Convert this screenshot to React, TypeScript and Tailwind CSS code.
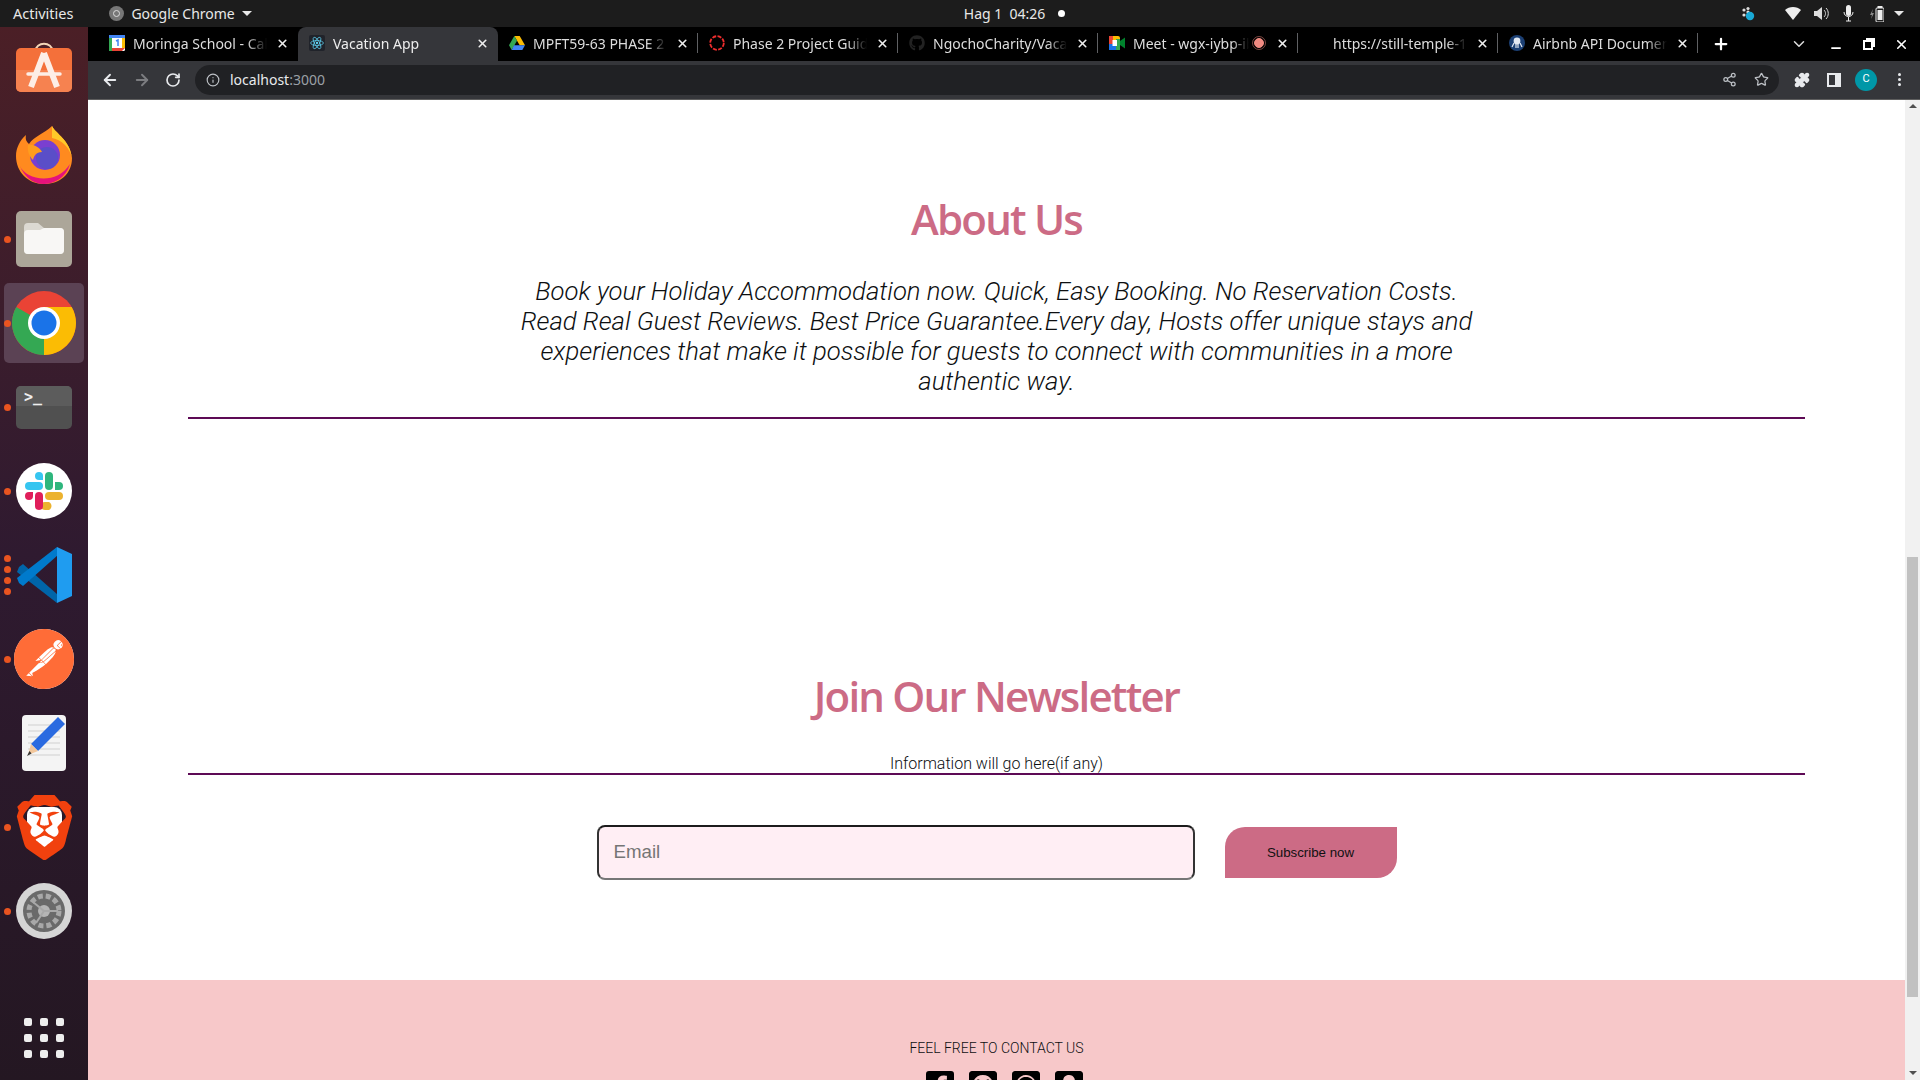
import { FaGithub, FaFacebookSquare, FaGithubSquare, FaWhatsappSquare, FaSnapchatSquare } from 'react-icons/fa'
import { SiBrave, SiPostman } from 'react-icons/si'
import { ArrowLeft, ArrowRight, ChevronDown, Info, Minus, Plus, RotateCw, Share2, Star, X, Puzzle } from 'lucide-react'

const uiFont = "font-['Noto_Sans',sans-serif]"

function AppStoreIcon() {
  return (
    <svg width="56" height="52" viewBox="0 0 56 52">
      <path d="M19 12 C20 1 36 1 37 12" fill="none" stroke="#f3d6b8" strokeWidth="2" />
      <rect y="8" width="56" height="44" rx="5" fill="#f4703a" />
      <path d="M0 30 H56 V47 a5 5 0 0 1 -5 5 H5 a5 5 0 0 1 -5 -5 Z" fill="#f68250" />
      <path d="M28 13 L15 47 M28 13 L41 47" stroke="#fdeee6" strokeWidth="6" fill="none" />
      <path d="M12 34 H44" stroke="#fdeee6" strokeWidth="3.5" strokeLinecap="round" />
    </svg>
  )
}

function FirefoxIcon() {
  return (
    <svg width="56" height="58" viewBox="0 0 56 58">
      <path d="M36 0 C40 8 54 14 56 32 C56 48 44 58 28 58 C12 58 0 46 0 30 C0 22 4 14 10 9 C9 14 11 16 13 18 C18 10 28 8 36 0 Z" fill="#ff8a1f" />
      <path d="M36 0 C40 8 54 14 56 32 C54 22 46 14 36 12 Z" fill="#ffc929" />
      <path d="M4 40 C10 54 40 60 54 38 C50 52 38 58 28 58 C16 58 8 50 4 40 Z" fill="#e5127c" />
      <circle cx="29" cy="29" r="15" fill="#7a3fd0" />
      <circle cx="31" cy="32" r="11" fill="#5a4ec8" />
      <path d="M12 19 C18 18 24 22 26 26 C20 26 18 30 17 34 C13 30 11 24 12 19 Z" fill="#ff9d1e" />
    </svg>
  )
}

function FilesIcon() {
  return (
    <div className="flex h-14 w-14 items-center justify-center rounded-[5px] bg-[#aca699]">
      <svg width="40" height="32" viewBox="0 0 40 32">
        <path d="M0 4 a4 4 0 0 1 4 -4 H14 L20 5 H36 a4 4 0 0 1 4 4 V27 a4 4 0 0 1 -4 4 H4 a4 4 0 0 1 -4 -4 Z" fill="#dcd9d2" />
        <path d="M0 11 a4 4 0 0 1 4 -4 H16 L20 5 H36 a4 4 0 0 1 4 4 V27 a4 4 0 0 1 -4 4 H4 a4 4 0 0 1 -4 -4 Z" fill="#f8f7f5" />
      </svg>
    </div>
  )
}

function ChromeIcon({ size }: { size: number }) {
  return (
    <svg width={size} height={size} viewBox="0 0 64 64">
      <circle cx="32" cy="32" r="32" fill="#ea4335" />
      <path d="M32 32 L4.3 16 A32 32 0 0 0 32 64 Z" fill="#34a853" />
      <path d="M32 32 L32 64 A32 32 0 0 0 59.7 16 L32 16 Z" fill="#fbbc04" />
      <circle cx="32" cy="32" r="16" fill="#fff" />
      <circle cx="32" cy="32" r="12.5" fill="#1a73e8" />
    </svg>
  )
}

function TerminalIcon() {
  return (
    <div className="relative h-[43px] w-14 overflow-hidden rounded-[5px] bg-[#505050]">
      <div className="h-5 bg-[#5c5c5c]" />
      <span className="absolute left-2 top-0 font-['DejaVu_Sans_Mono',monospace] text-[15px] font-bold leading-[22px] text-[#eeeeee]">&gt;_</span>
    </div>
  )
}

function SlackIcon() {
  return (
    <div className="flex h-14 w-14 items-center justify-center rounded-full bg-white">
      <svg width="38" height="38" viewBox="0 0 38 38">
        <rect x="0" y="10" width="18" height="8" rx="4" fill="#36c5f0" />
        <path d="M10 4 a4 4 0 0 1 8 0 v4 h-4 a4 4 0 0 1 -4 -4 Z" fill="#36c5f0" />
        <rect x="20" y="0" width="8" height="18" rx="4" fill="#2eb67d" />
        <path d="M30 10 h4 a4 4 0 0 1 0 8 h-4 Z" fill="#2eb67d" />
        <rect x="20" y="20" width="18" height="8" rx="4" fill="#ecb22e" />
        <path d="M20 30 h4 a4 4 0 0 1 -4 8 a4 4 0 0 1 0 -8 Z" fill="#ecb22e" />
        <rect x="10" y="20" width="8" height="18" rx="4" fill="#e01e5a" />
        <path d="M8 20 v4 a4 4 0 0 1 -8 0 a4 4 0 0 1 4 -4 Z" fill="#e01e5a" />
      </svg>
    </div>
  )
}

function VsCodeIcon() {
  return (
    <svg width="56" height="56" viewBox="0 0 56 56">
      <path d="M3 20 L7 17 L42 48 L41 56 L1 25 Z" fill="#0065a9" />
      <path d="M3 36 L7 39 L42 8 L41 0 L1 31 Z" fill="#007acc" />
      <path d="M41 0 L56 7 V49 L41 56 Z" fill="#1f9cf0" />
    </svg>
  )
}

function EditorIcon() {
  return (
    <svg width="44" height="56" viewBox="0 0 44 56">
      <rect width="44" height="56" rx="4" fill="#f4f4f4" />
      {[10, 16, 22, 28, 34, 40].map((y) => (
        <path key={y} d="M6 0 H38" transform={`translate(0 ${y})`} stroke="#d0d0d0" strokeWidth="1" />
      ))}
      <path d="M36 2 L43 9 L16 36 L9 29 Z" fill="#2a6ae0" />
      <path d="M9 29 L16 36 L6 40 Z" fill="#f2c79c" />
      <path d="M7.5 36 L9.5 38.5 L5 41 Z" fill="#333" />
    </svg>
  )
}

function BraveIcon() {
  return (
    <div className="relative h-[65px] w-[65px]">
      <div className="absolute left-[15px] top-[12px] h-[42px] w-[35px] rounded-lg bg-white" />
      <SiBrave className="relative h-[65px] w-[65px] text-[#f1410e]" />
    </div>
  )
}

function SettingsIcon() {
  return (
    <svg width="56" height="56" viewBox="0 0 56 56">
      <circle cx="28" cy="28" r="28" fill="#d5d5d5" />
      <circle cx="28" cy="28" r="21" fill="#6a6a6a" />
      <circle cx="28" cy="28" r="15" fill="none" stroke="#a8a8a8" strokeWidth="5" strokeDasharray="5 3" />
      <circle cx="28" cy="28" r="11" fill="#6a6a6a" />
      <circle cx="28" cy="28" r="6" fill="#b5b5b5" />
      <path d="M28 28 L17 19 M28 28 L42 28 M28 28 L20 40" stroke="#a8a8a8" strokeWidth="2" />
    </svg>
  )
}

const dockItems = [
  { id: 'store', icon: <div className="mb-[10px]"><AppStoreIcon /></div>, dots: 0 },
  { id: 'firefox', icon: <FirefoxIcon />, dots: 0 },
  { id: 'files', icon: <FilesIcon />, dots: 1 },
  { id: 'chrome', icon: <ChromeIcon size={64} />, dots: 1, active: true },
  { id: 'terminal', icon: <TerminalIcon />, dots: 1 },
  { id: 'slack', icon: <SlackIcon />, dots: 1 },
  { id: 'vscode', icon: <VsCodeIcon />, dots: 4 },
  { id: 'postman', icon: <div className="rounded-full bg-white"><SiPostman className="h-[60px] w-[60px] text-[#ff6c37]" /></div>, dots: 1 },
  { id: 'editor', icon: <EditorIcon />, dots: 0 },
  { id: 'brave', icon: <BraveIcon />, dots: 1 },
  { id: 'settings', icon: <SettingsIcon />, dots: 1 },
]

function Dock() {
  return (
    <aside className="flex h-full w-[88px] shrink-0 flex-col bg-gradient-to-b from-[#4b1f26] via-[#2f1a30] to-[#241722] pt-[2px]">
      {dockItems.map((item) => (
        <div key={item.id} className="relative flex h-[84px] shrink-0 items-center justify-center">
          {item.active && <div className="absolute inset-x-1 inset-y-[2px] rounded-[5px] bg-[#5b4254]" />}
          <div className="absolute left-1 top-0 flex h-full flex-col justify-center gap-[4px]">
            {Array.from({ length: item.dots }).map((_, i) => (
              <span key={i} className="h-[7px] w-[7px] rounded-full bg-[#e95420]" />
            ))}
          </div>
          <div className="relative flex items-center justify-center">{item.icon}</div>
        </div>
      ))}
      <div className="mt-auto grid grid-cols-3 gap-2 self-center pb-[22px]">
        {Array.from({ length: 9 }).map((_, i) => (
          <span key={i} className="h-2 w-2 rounded-[2px] bg-[#eeeeee]" />
        ))}
      </div>
    </aside>
  )
}

function TopBar() {
  return (
    <header className={`flex h-[27px] shrink-0 items-center bg-[#1c1c1c] text-[14px] text-[#e8e8e8] ${uiFont}`}>
      <span className="ml-[13px] text-[14.5px]">Activities</span>
      <span className="ml-[36px] flex h-[15px] w-[15px] items-center justify-center rounded-full bg-[#777]">
        <span className="h-[7px] w-[7px] rounded-full border border-[#ddd]" />
      </span>
      <span className="ml-[7px]">Google Chrome</span>
      <span className="ml-[7px] h-0 w-0 border-x-[5px] border-t-[5px] border-x-transparent border-t-[#e8e8e8]" />
      <div className="ml-[712px] flex items-center">
        <span>Hag 1&nbsp;&nbsp;04:26</span>
        <span className="ml-[13px] h-[7px] w-[7px] rounded-full bg-white" />
      </div>
      <div className="ml-auto mr-[16px] flex items-center">
        <svg width="14" height="16" viewBox="0 0 14 16">
          <circle cx="3" cy="4" r="1.6" fill="#ddd" /><circle cx="7" cy="2.5" r="1.6" fill="#ddd" />
          <circle cx="3" cy="9" r="1.6" fill="#ddd" /><circle cx="7" cy="6" r="1.6" fill="#ddd" />
          <circle cx="9" cy="10" r="4.2" fill="#19a9d6" />
        </svg>
        <svg className="ml-[30px]" width="16" height="13" viewBox="0 0 16 13"><path d="M0 3 C4 -1 12 -1 16 3 L8 13 Z" fill="#eee" /></svg>
        <svg className="ml-[13px]" width="15" height="13" viewBox="0 0 15 13">
          <path d="M0 4 H3 L8 0 V13 L3 9 H0 Z" fill="#ddd" />
          <path d="M10 3 C12 5 12 8 10 10 M12 1 C15 4 15 9 12 12" stroke="#ddd" fill="none" />
        </svg>
        <svg className="ml-[14px]" width="11" height="17" viewBox="0 0 11 17">
          <rect x="3" y="0" width="5" height="11" rx="2.5" fill="#eee" />
          <path d="M1 7 C1 13 10 13 10 7 M5.5 12 V16 M3 16 H8" stroke="#eee" fill="none" />
        </svg>
        <svg className="ml-[16px]" width="14" height="16" viewBox="0 0 14 16">
          <path d="M3 3 L0 9 H2 L1 13 L4 7 H2 Z" fill="#888" />
          <rect x="6" y="2" width="8" height="14" rx="1" fill="none" stroke="#eee" />
          <rect x="7.5" y="0" width="5" height="2" fill="#eee" />
          <rect x="7.5" y="4" width="5" height="10" fill="#eee" />
        </svg>
        <span className="ml-[10px] h-0 w-0 border-x-[5px] border-t-[5px] border-x-transparent border-t-[#e8e8e8]" />
      </div>
    </header>
  )
}

const Calendar = () => (
  <svg width="16" height="16" viewBox="0 0 16 16">
    <rect width="16" height="16" rx="1.5" fill="#fff" />
    <path d="M0 0 H16 V3 H0 Z" fill="#4285f4" /><path d="M0 3 H3 V16 H0 Z" fill="#34a853" />
    <path d="M13 3 H16 V13 H13 Z" fill="#fbbc04" /><path d="M3 13 H16 L13 16 H3 Z" fill="#ea4335" />
    <path d="M7 6 L9 5 V11" stroke="#4285f4" strokeWidth="1.5" fill="none" />
  </svg>
)

const ReactFavicon = () => (
  <div className="flex h-4 w-4 items-center justify-center rounded-[2px] bg-[#20232a]">
    <svg width="14" height="14" viewBox="-12 -12 24 24" fill="none" stroke="#61dafb" strokeWidth="1.2">
      <circle r="2" fill="#61dafb" stroke="none" />
      <ellipse rx="11" ry="4.2" />
      <ellipse rx="11" ry="4.2" transform="rotate(60)" />
      <ellipse rx="11" ry="4.2" transform="rotate(120)" />
    </svg>
  </div>
)

const Drive = () => (
  <svg width="16" height="14" viewBox="0 0 16 14">
    <path d="M5.3 0 H10.7 L16 9.3 H10.7 Z" fill="#fbbc04" />
    <path d="M5.3 0 L8 4.7 L2.7 14 L0 9.3 Z" fill="#34a853" />
    <path d="M5 9.3 H16 L13.3 14 H2.7 Z" fill="#4285f4" />
  </svg>
)

const Spinner = () => (
  <svg width="16" height="16" viewBox="0 0 16 16">
    <circle cx="8" cy="8" r="6.8" fill="none" stroke="#f02e2e" strokeWidth="1.8" strokeDasharray="4 1.4" />
  </svg>
)

const Meet = () => (
  <svg width="16" height="14" viewBox="0 0 16 14">
    <rect x="0" y="0" width="11" height="14" rx="2" fill="#fbbc04" />
    <rect x="0" y="7" width="11" height="7" fill="#1a73e8" />
    <rect x="0" y="0" width="4" height="8" fill="#ea4335" />
    <rect x="7" y="3" width="4" height="11" fill="#34a853" />
    <rect x="3.5" y="4" width="4.5" height="6" fill="#fff" />
    <path d="M11 5 L16 1.5 V12.5 L11 9 Z" fill="#00832d" />
  </svg>
)

const Airbnb = () => (
  <svg width="16" height="16" viewBox="0 0 16 16">
    <circle cx="8" cy="8" r="8" fill="#1b3f73" />
    <circle cx="8" cy="6" r="3.4" fill="#e3e9f2" />
    <path d="M5 8 L3 12 M7 9 V13 M9 9 V13 M11 8 L13 12" stroke="#e3e9f2" strokeWidth="1.2" />
  </svg>
)

type Tab = { title: string; icon?: React.ReactNode; active?: boolean; record?: boolean; separator?: boolean }

const tabs: Tab[] = [
  { title: 'Moringa School - Calendar', icon: <Calendar /> },
  { title: 'Vacation App', icon: <ReactFavicon />, active: true },
  { title: 'MPFT59-63 PHASE 2 - Google', icon: <Drive />, separator: true },
  { title: 'Phase 2 Project Guidelines', icon: <Spinner />, separator: true },
  { title: 'NgochoCharity/Vacation', icon: <FaGithub className="h-4 w-4 text-[#222]" />, separator: true },
  { title: 'Meet - wgx-iybp-ibn', icon: <Meet />, record: true, separator: true },
  { title: 'https://still-temple-12345', separator: true },
  { title: 'Airbnb API Documentation', icon: <Airbnb />, separator: true },
]

function TabItem({ tab }: { tab: Tab }) {
  return (
    <div
      className={`relative flex h-[34px] w-[200px] shrink-0 items-center pb-[2px] pl-[11px] text-[14px] ${
        tab.active ? 'rounded-t-[8px] bg-[#35363a] text-[#eeeeee]' : 'text-[#dddddd]'
      }`}
    >
      <span className="flex w-4 shrink-0 items-center justify-center">{tab.icon}</span>
      <span
        className={`ml-2 overflow-hidden whitespace-nowrap [mask-image:linear-gradient(to_right,black_85%,transparent)] ${
          tab.record ? 'w-[116px]' : 'w-[134px]'
        }`}
      >
        {tab.title}
      </span>
      {tab.record && <span className="ml-[5px] h-[10px] w-[10px] rounded-full border border-[#f28b82] bg-[#f28b82] outline outline-1 outline-offset-1 outline-[#f28b82]/50" />}
      <X className="absolute left-[178px] h-[13px] w-[13px] text-[#eeeeee]" strokeWidth={3} />
      {tab.separator && <span className="absolute right-0 h-5 w-px bg-[#5f6063]" />}
    </div>
  )
}

function TabStrip() {
  return (
    <div className={`flex h-[34px] shrink-0 items-center bg-black pl-[10px] ${uiFont}`}>
      {tabs.map((tab) => (
        <TabItem key={tab.title} tab={tab} />
      ))}
      <Plus className="ml-[14px] h-[18px] w-[18px] text-white" strokeWidth={3} />
      <ChevronDown className="ml-[60px] h-[18px] w-[18px] text-[#ddd]" strokeWidth={2} />
      <Minus className="ml-[21px] mt-2 h-[14px] w-[14px] text-white" strokeWidth={3} />
      <svg className="ml-[20px]" width="12" height="12" viewBox="0 0 12 12" fill="none" stroke="#fff" strokeWidth="2">
        <path d="M4 3 V1 H11 V8 H9" />
        <rect x="1" y="3" width="8" height="8" />
      </svg>
      <X className="ml-[19px] h-[15px] w-[15px] text-white" strokeWidth={2.5} />
    </div>
  )
}

function Toolbar() {
  return (
    <div className="flex h-[39px] shrink-0 items-center border-b border-[#5e5e5e] bg-[#35363a] pb-[1px] text-[#e8eaed]">
      <ArrowLeft className="ml-[13px] h-[18px] w-[18px]" strokeWidth={2.5} />
      <ArrowRight className="ml-[14px] h-[18px] w-[18px] text-[#7c7d80]" strokeWidth={2.5} />
      <RotateCw className="ml-[14px] h-4 w-4" strokeWidth={2.5} />
      <div className={`ml-[14px] flex h-[30px] w-[1584px] items-center rounded-full bg-[#202124] pl-[11px] ${uiFont}`}>
        <Info className="h-[14px] w-[14px] text-[#bdc1c6]" />
        <span className="ml-[10px] text-[14px]">
          localhost<span className="text-[#9aa0a6]">:3000</span>
        </span>
        <Share2 className="ml-auto h-[15px] w-[15px] text-[#bdc1c6]" />
        <Star className="ml-[17px] mr-[10px] h-[15px] w-[15px] text-[#bdc1c6]" />
      </div>
      <Puzzle className="ml-[15px] h-4 w-4 fill-[#e8eaed]" />
      <div className="ml-[17px] h-[14px] w-[14px] border-2 border-r-[6px] border-[#e8eaed]" />
      <span className="ml-[14px] flex h-[22px] w-[22px] items-center justify-center rounded-full bg-[#0097a7] font-['Roboto',sans-serif] text-[11px] text-white">C</span>
      <div className="ml-[21px] flex flex-col gap-[2px]">
        <span className="h-[3px] w-[3px] rounded-full bg-[#e8eaed]" />
        <span className="h-[3px] w-[3px] rounded-full bg-[#e8eaed]" />
        <span className="h-[3px] w-[3px] rounded-full bg-[#e8eaed]" />
      </div>
    </div>
  )
}

function Scrollbar() {
  return (
    <div className="flex w-[15px] shrink-0 flex-col items-center bg-[#f1f1f1]">
      <span className="mt-[4px] h-0 w-0 border-x-[4px] border-b-[4px] border-x-transparent border-b-[#505050]" />
      <div className="mt-[449px] h-[440px] w-[11px] bg-[#c1c1c1]" />
      <span className="mb-[5px] mt-auto h-0 w-0 border-x-[4px] border-t-[4px] border-x-transparent border-t-[#505050]" />
    </div>
  )
}

function Page() {
  return (
    <main className="flex min-w-0 flex-1 flex-col overflow-hidden bg-white font-['Roboto',sans-serif]">
      <section className="flex flex-col items-center pt-[91px]">
        <h1 className="h-[56px] font-['Open_Sans',sans-serif] text-[42px] font-semibold leading-[56px] tracking-[-1.8px] text-[#cc6b85]">About Us</h1>
        <p className="mt-[29px] w-[960px] text-center text-[25.7px] font-light italic leading-[30px] text-[#0d0f11]">
          Book your Holiday Accommodation now. Quick, Easy Booking. No Reservation Costs. Read Real Guest Reviews. Best Price Guarantee.Every day, Hosts offer unique stays and experiences that make it possible for guests to connect with communities in a more authentic way.
        </p>
      </section>
      <hr className="mx-auto mt-[21px] w-[1617px] border-t-2 border-[#5d0a55]" />

      <section className="flex flex-col items-center pt-[249px]">
        <h2 className="h-[56px] font-['Open_Sans',sans-serif] text-[42px] font-semibold leading-[56px] tracking-[-1.8px] text-[#cc6b85]">Join Our Newsletter</h2>
        <p className="mt-[28px] h-[24px] text-[16px] font-light leading-[24px] text-[#0d0f11]">Information will go here(if any)</p>
      </section>
      <hr className="mx-auto mt-[-3px] w-[1617px] border-t-2 border-[#5d0a55]" />

      <form className="mt-[50px] flex items-center justify-center">
        <input
          placeholder="Email"
          className="h-[55px] w-[598px] rounded-[8px] border-2 border-t-[#1c1c1c] border-x-[#333] border-b-[#767676] bg-[#ffeef4] px-[15px] pb-[1px] font-['Liberation_Sans',sans-serif] text-[18.7px] text-[#212529] placeholder:text-[#757575]"
        />
        <button type="button" className="ml-[30px] h-[51px] w-[172px] rounded-tl-[20px] rounded-br-[20px] bg-[#cc6b85] font-['Liberation_Sans',sans-serif] text-[13.3px] text-[#111]">
          Subscribe now
        </button>
      </form>

      <footer className="mt-[100px] flex flex-1 flex-col items-center bg-[#f7c8c9] pt-[59px]">
        <p className="h-[18px] text-[14px] font-light leading-[18px] text-[#0d0f11]">FEEL FREE TO CONTACT US</p>
        <div className="ml-[16px] mt-[12px] flex gap-[15px]">
          <FaFacebookSquare className="h-8 w-7 shrink-0 text-black" />
          <FaGithubSquare className="h-8 w-7 shrink-0 text-black" />
          <FaWhatsappSquare className="h-8 w-7 shrink-0 text-black" />
          <FaSnapchatSquare className="h-8 w-7 shrink-0 text-black" />
        </div>
      </footer>
    </main>
  )
}

export default function App() {
  return (
    <div className="flex h-screen w-screen flex-col overflow-hidden bg-black">
      <TopBar />
      <div className="flex min-h-0 flex-1">
        <Dock />
        <div className="flex min-w-0 flex-1 flex-col">
          <TabStrip />
          <Toolbar />
          <div className="flex min-h-0 flex-1">
            <Page />
            <Scrollbar />
          </div>
        </div>
      </div>
    </div>
  )
}
